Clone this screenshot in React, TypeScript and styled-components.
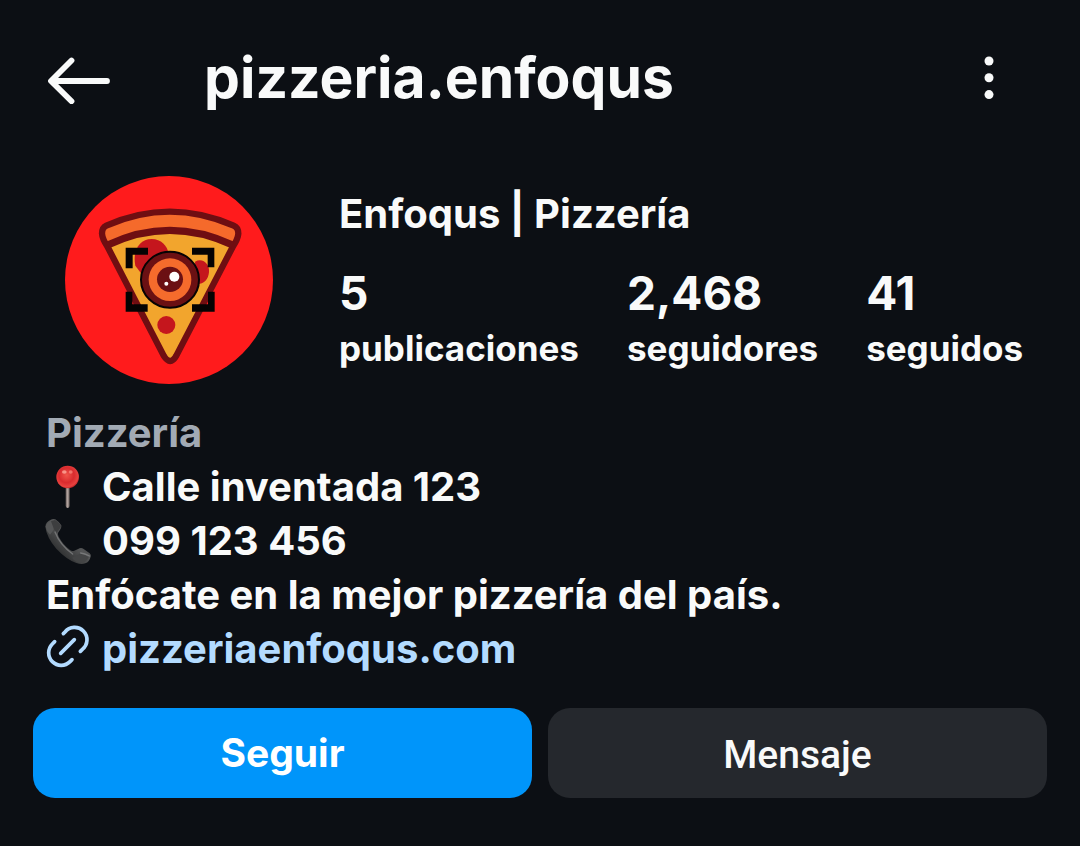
import React from "react";
import styled, { createGlobalStyle } from "styled-components";

const GlobalStyle = createGlobalStyle`
  *, *::before, *::after { box-sizing: border-box; }
  html { background: #0c0f14; }
  body { margin: 0; background: #0c0f14; color: #f9fafa; font-family: Inter, "Liberation Sans", sans-serif; }
`;

const Page = styled.main`
  padding: 40px 33px 48px;
`;

const Header = styled.header`
  display: flex;
  align-items: center;
  height: 80px;
  padding: 0 40px 0 14px;
`;

const IconButton = styled.button<{ $width: number }>`
  display: flex;
  align-items: center;
  justify-content: center;
  width: ${(p) => p.$width}px;
  height: 64px;
  padding: 0;
  border: 0;
  background: none;
  color: inherit;
  cursor: pointer;
`;

const Username = styled.h1`
  flex: 1;
  margin: 0 0 0 93px;
  padding-bottom: 5px;
  font-size: 57px;
  line-height: 72px;
  font-weight: 700;
`;

const Profile = styled.section`
  display: flex;
  align-items: center;
  gap: 66px;
  margin-top: 56px;
  padding-left: 32px;
`;

const Avatar = styled.svg`
  flex: none;
  width: 208px;
  height: 208px;
  border-radius: 50%;
`;

const Info = styled.div`
  display: flex;
  flex-direction: column;
  gap: 24px;
  padding-top: 2px;
`;

const Name = styled.h2`
  margin: 0;
  font-size: 40px;
  line-height: 54px;
  font-weight: 700;
`;

const Stats = styled.ul`
  display: flex;
  gap: 48px;
  margin: 0;
  padding: 0;
  list-style: none;
`;

const Stat = styled.li`
  display: flex;
  flex-direction: column;
`;

const StatValue = styled.strong`
  font-size: 46px;
  line-height: 56px;
  font-weight: 700;
`;

const StatLabel = styled.span`
  font-size: 35px;
  line-height: 54px;
  font-weight: 700;
`;

const Bio = styled.section`
  margin-top: 22px;
  padding-left: 13px;
  font-size: 40px;
  line-height: 54px;
  font-weight: 700;
`;

const Line = styled.p<{ $muted?: boolean }>`
  display: flex;
  align-items: center;
  gap: 10px;
  margin: 0;
  color: ${(p) => (p.$muted ? "#a2aab4" : "inherit")};
`;

const BioIcon = styled.svg`
  flex: none;
  width: 46px;
  height: 46px;
  overflow: visible;
`;

const SiteLink = styled.a`
  color: #b3dbff;
  text-decoration: none;
`;

const Actions = styled.div`
  display: grid;
  grid-template-columns: 1fr 1fr;
  gap: 16px;
  margin-top: 32px;
`;

const ActionButton = styled.button<{ $primary?: boolean }>`
  height: 90px;
  padding: ${(p) => (p.$primary ? "0" : "4px 0 0")};
  border: 0;
  border-radius: 22px;
  background: ${(p) => (p.$primary ? "#0095fa" : "#25282d")};
  color: ${(p) => (p.$primary ? "#ffffff" : "#f9fafa")};
  font-family: ${(p) => (p.$primary ? "Inter" : "Roboto")}, "Liberation Sans", sans-serif;
  font-size: 39px;
  line-height: 48px;
  font-weight: ${(p) => (p.$primary ? 700 : 500)};
  cursor: pointer;
`;

const stats = [
  { value: "5", label: "publicaciones" },
  { value: "2,468", label: "seguidores" },
  { value: "41", label: "seguidos" },
];

const BackArrow = () => (
  <svg width="64" height="48" viewBox="0 0 64 48" fill="none" stroke="currentColor" strokeWidth="5.8" strokeLinecap="round" strokeLinejoin="round" aria-hidden="true">
    <path d="M24.5 4.5 4 25l20.5 20.3M6 25h54" />
  </svg>
);

const Dots = () => (
  <svg width="10" height="48" viewBox="0 0 10 48" fill="currentColor" aria-hidden="true">
    <circle cx="5" cy="5" r="4.5" />
    <circle cx="5" cy="21.8" r="4.5" />
    <circle cx="5" cy="38.6" r="4.5" />
  </svg>
);

const PizzaLogo = () => (
  <Avatar viewBox="30 33 624 624" role="img" aria-label="Enfoqus Pizzería">
    <rect x="30" y="33" width="624" height="624" fill="#ff1b1c" />
    <path d="M160 240 C275 188 410 188 530 240 L364 576 Q346 602 326 576 Z" fill="#f2a52d" />
    <path d="M241 302 C232 260 252 222 290 222 C318 222 338 242 341 268 L300 310 L262 330 Z" fill="#c5161d" />
    <path d="M420 290 C444 277 465 298 462 322 C460 346 442 360 424 357 Z" fill="#c5161d" />
    <circle cx="334" cy="480" r="27" fill="#c5161d" />
    <path d="M154 182 Q344 98 536 182 Q550 188 550 206 Q550 222 533 242 Q344 152 158 242 Q141 224 141 206 Q141 188 154 182 Z" fill="#f56a2b" />
    <path d="M154 182 Q344 98 536 182 Q550 188 550 206 Q549 222 533 246 L364 572 Q346 604 326 572 L158 246 Q142 222 141 206 Q141 188 154 182 Z" fill="none" stroke="#6f0e12" strokeWidth="19" strokeLinejoin="round" />
    <path d="M158 240 Q344 152 533 240" fill="none" stroke="#6f0e12" strokeWidth="22" />
    <g fill="#050303">
      <path d="M212 248h67v21h-46v41h-21z" />
      <path d="M411 248h67v59h-20v-38h-47z" />
      <path d="M212 380h20v38h46v22h-66z" />
      <path d="M459 380h20v60h-68v-22h48z" />
    </g>
    <ellipse cx="345" cy="344" rx="87" ry="84" fill="#6b1013" stroke="#070304" strokeWidth="6" />
    <ellipse cx="345" cy="344" rx="64" ry="64" fill="#f56b2c" />
    <ellipse cx="345" cy="343" rx="39" ry="38" fill="#6b1013" />
    <circle cx="358" cy="335" r="15" fill="#fff" />
    <circle cx="334" cy="356" r="6" fill="#fff" />
  </Avatar>
);

const PinIcon = () => (
  <BioIcon viewBox="33 162 138 138" role="img" aria-label="Dirección">
    <defs>
      <radialGradient id="pinHead" cx="45%" cy="42%" r="60%">
        <stop offset="0" stopColor="#f0554a" />
        <stop offset="0.55" stopColor="#d92b2e" />
        <stop offset="0.85" stopColor="#e8423f" />
        <stop offset="1" stopColor="#b51f24" />
      </radialGradient>
      <linearGradient id="pinNeedle" x1="0" x2="1">
        <stop offset="0" stopColor="#6b5f5c" />
        <stop offset="0.5" stopColor="#b7a9a4" />
        <stop offset="1" stopColor="#5e5350" />
      </linearGradient>
    </defs>
    <path d="M92 230h12v58q-1 6-6 6t-6-6z" fill="url(#pinNeedle)" />
    <circle cx="98" cy="201" r="34" fill="url(#pinHead)" />
    <ellipse cx="88" cy="186" rx="7" ry="5" fill="#ffb1a2" opacity="0.75" />
    <ellipse cx="107" cy="186" rx="6" ry="5" fill="#ff9d8e" opacity="0.6" />
  </BioIcon>
);

const PhoneIcon = () => (
  <BioIcon viewBox="33 324 138 138" role="img" aria-label="Teléfono">
    <defs>
      <linearGradient id="handset" x1="0" y1="1" x2="1" y2="0">
        <stop offset="0.3" stopColor="#343536" />
        <stop offset="0.55" stopColor="#555657" />
        <stop offset="0.8" stopColor="#3a3b3c" />
      </linearGradient>
    </defs>
    <path d="M31 350 Q32 337 46 330 Q54 325 61 328 Q75 338 79 346 Q80 351 77 356 L69 369 Q68 374 71 380 Q84 404 105 420 Q111 425 118 422 L134 415 Q140 413 146 417 L164 430 Q169 434 167 440 Q163 455 151 460 Q139 464 124 459 Q94 448 64 416 Q35 382 31 350 Z" fill="url(#handset)" />
    <path d="M32 350 Q34 338 46 332 Q54 342 56 354 Q57 360 53 364 L45 374 Q33 362 32 350 Z" fill="#555657" />
    <path d="M60 330 Q74 339 77 347 Q78 351 75 355 L65 368 L57 358 L48 334 Z" fill="#3d3e3f" />
    <path d="M60 366 Q75 405 113 432" fill="none" stroke="#737475" strokeWidth="4" strokeLinecap="round" />
    <path d="M111 443 L137 430 Q145 430 161 442 Q153 458 139 459 Q121 458 111 443 Z" fill="#444546" />
    <path d="M137 429 Q148 430 164 438" fill="none" stroke="#78797a" strokeWidth="4" strokeLinecap="round" />
  </BioIcon>
);

const ChainIcon = () => (
  <BioIcon viewBox="33 153 138 138" fill="none" stroke="#b3dbff" strokeWidth="11" strokeLinecap="round" aria-hidden="true">
    <path d="M85 176 L90 171 A37 37 0 1 1 142 223 L136 229" />
    <path d="M59 200 L52 207 A37 37 0 1 0 105 260 L111 254" />
    <path d="M77 235 L118 194" />
  </BioIcon>
);

export default function App() {
  return (
    <>
      <GlobalStyle />
      <Page>
        <Header>
          <IconButton $width={64} type="button" aria-label="Atrás"><BackArrow /></IconButton>
          <Username>pizzeria.enfoqus</Username>
          <IconButton $width={36} type="button" aria-label="Más opciones"><Dots /></IconButton>
        </Header>
        <Profile>
          <PizzaLogo />
          <Info>
            <Name>Enfoqus | Pizzería</Name>
            <Stats>
              {stats.map((s) => (
                <Stat key={s.label}>
                  <StatValue>{s.value}</StatValue>
                  <StatLabel>{s.label}</StatLabel>
                </Stat>
              ))}
            </Stats>
          </Info>
        </Profile>
        <Bio>
          <Line $muted>Pizzería</Line>
          <Line><PinIcon />Calle inventada 123</Line>
          <Line><PhoneIcon />099 123 456</Line>
          <Line>Enfócate en la mejor pizzería del país.</Line>
          <Line><ChainIcon /><SiteLink href="#sitio">pizzeriaenfoqus.com</SiteLink></Line>
        </Bio>
        <Actions>
          <ActionButton $primary type="button">Seguir</ActionButton>
          <ActionButton type="button">Mensaje</ActionButton>
        </Actions>
      </Page>
    </>
  );
}
